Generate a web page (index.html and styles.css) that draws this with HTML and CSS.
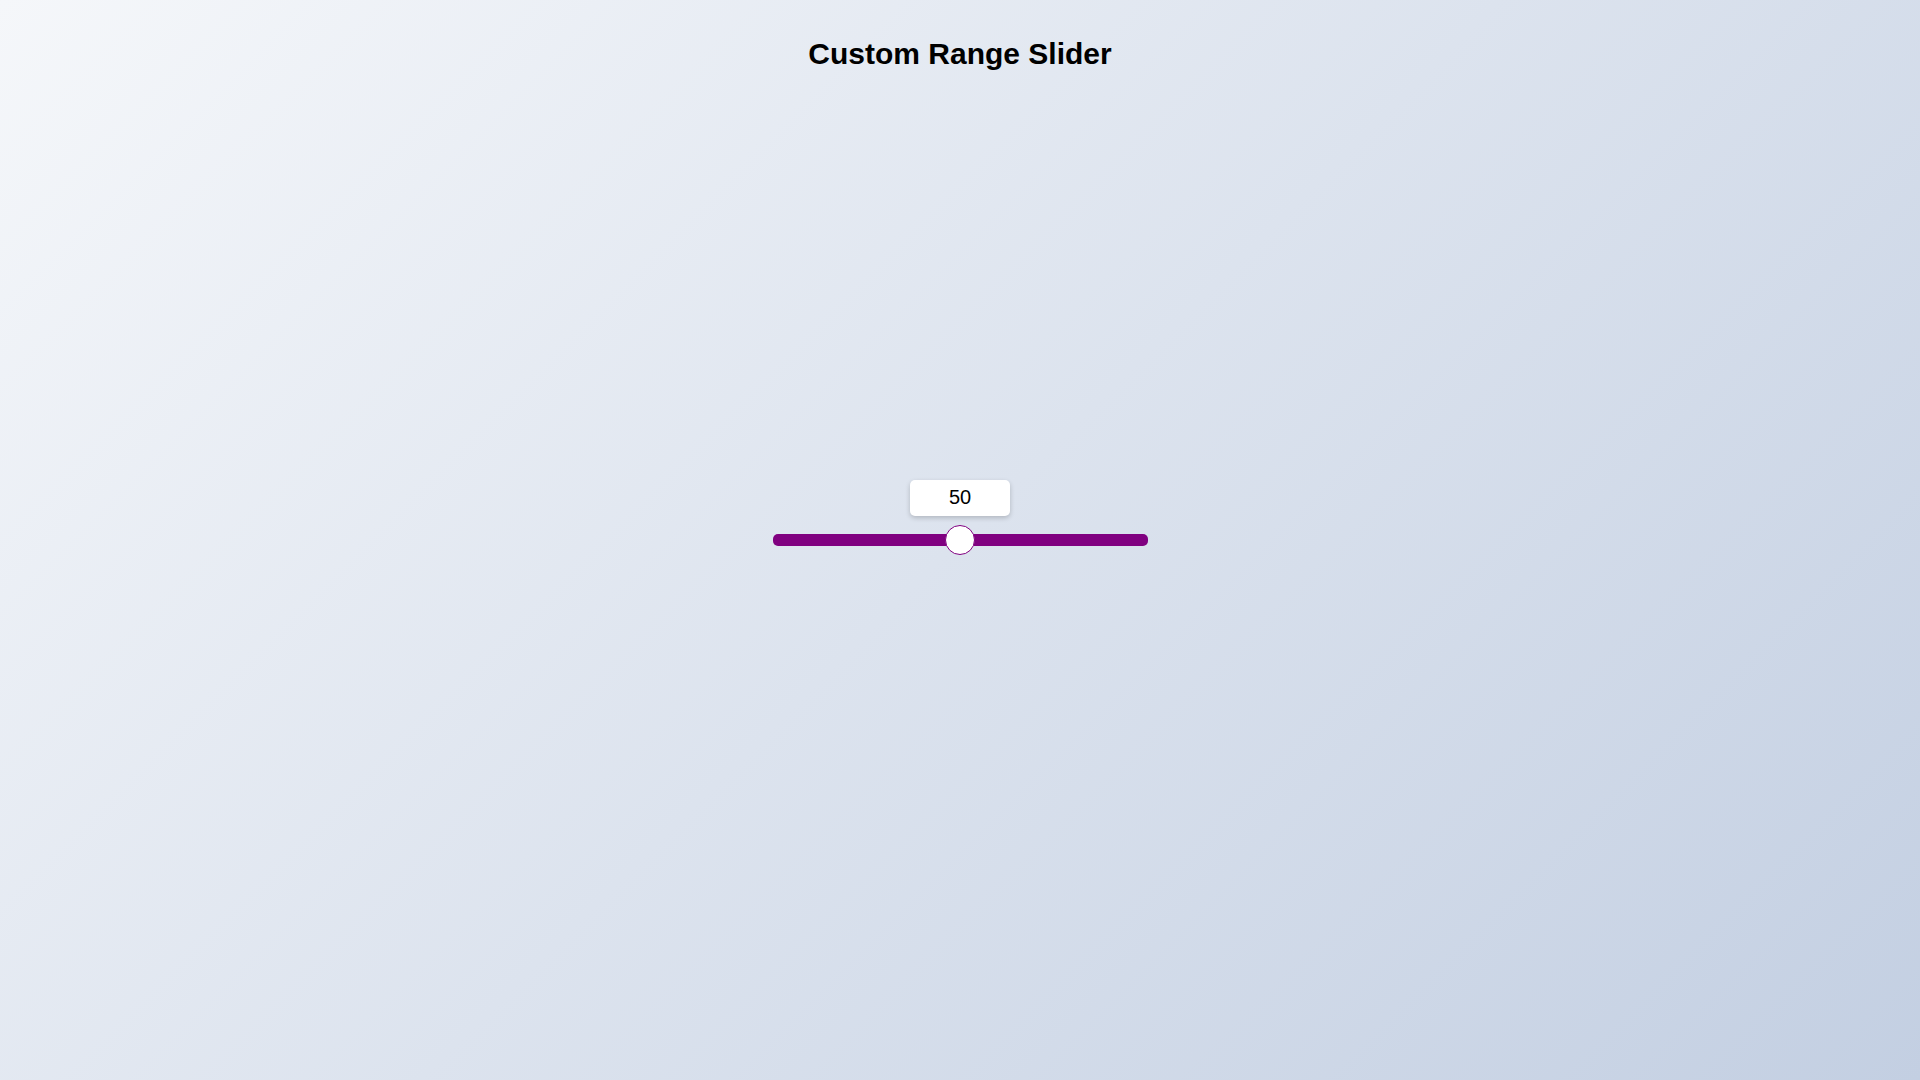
FILE: index.html
```html
<!DOCTYPE html>
<html lang="en">
<head>
<meta charset="utf-8">
<title>Custom Range Slider</title>
<link rel="stylesheet" href="styles.css">
</head>
<body>
<div class="page">
  <header class="top">
    <h1 class="title">Custom Range Slider</h1>
  </header>
  <div class="slider" role="slider" aria-valuemin="0" aria-valuemax="100" aria-valuenow="50">
    <div class="track"></div>
    <div class="thumb" style="left: 50%;"></div>
    <div class="bubble" style="left: 50%;">50</div>
  </div>
  <div class="bottom"></div>
</div>
</body>
</html>
```
FILE: styles.css
```css
* { box-sizing: border-box; }
html, body { margin: 0; padding: 0; }
body {
  font-family: "Liberation Sans", Arial, sans-serif;
  background: linear-gradient(135deg, #f5f7fa 0%, #c3cfe2 100%);
  min-height: 100vh;
}
.page {
  height: 100vh;
  display: grid;
  grid-template-rows: 1fr auto 1fr;
  justify-items: center;
}
.top {
  align-self: start;
  padding-top: 37px;
}
.title {
  margin: 0;
  font-size: 30px;
  font-weight: bold;
  color: #000;
  text-align: center;
}
.slider {
  position: relative;
  width: 375px;
  height: 30px;
  display: flex;
  align-items: center;
}
.track {
  width: 100%;
  height: 12px;
  border-radius: 5px;
  background: #800080;
}
.thumb {
  position: absolute;
  top: 0;
  width: 30px;
  height: 30px;
  margin-left: -15px;
  border-radius: 50%;
  background: #fff;
  border: 1px solid #800080;
}
.bubble {
  position: absolute;
  bottom: calc(100% + 9px);
  width: 100px;
  height: 36px;
  margin-left: -50px;
  background: #fff;
  border-radius: 5px;
  box-shadow: 0 2px 5px rgba(0, 0, 0, 0.2);
  display: flex;
  align-items: center;
  justify-content: center;
  font-size: 20px;
  color: #000;
  padding-bottom: 1px;
}
```
